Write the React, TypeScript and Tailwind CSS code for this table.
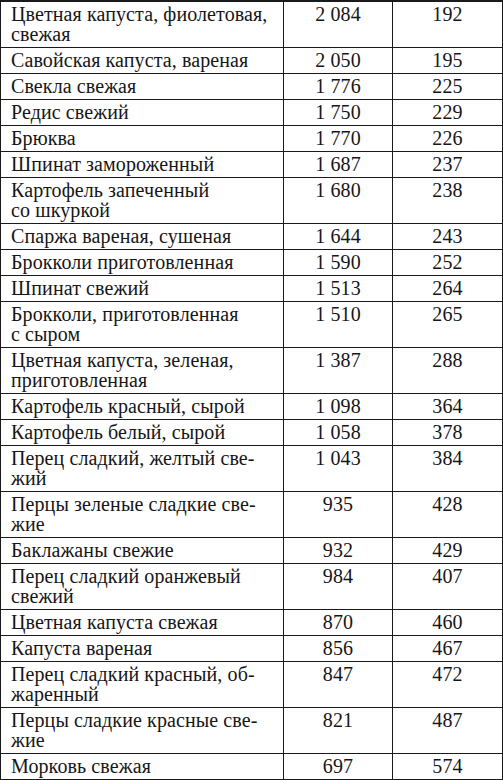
import React from "react";

type Row = { name: string[]; a: string; b: string };

const rows: Row[] = [
  { name: ["Цветная капуста, фиолетовая,", "свежая"], a: "2 084", b: "192" },
  { name: ["Савойская капуста, вареная"], a: "2 050", b: "195" },
  { name: ["Свекла свежая"], a: "1 776", b: "225" },
  { name: ["Редис свежий"], a: "1 750", b: "229" },
  { name: ["Брюква"], a: "1 770", b: "226" },
  { name: ["Шпинат замороженный"], a: "1 687", b: "237" },
  { name: ["Картофель запеченный", "со шкуркой"], a: "1 680", b: "238" },
  { name: ["Спаржа вареная, сушеная"], a: "1 644", b: "243" },
  { name: ["Брокколи приготовленная"], a: "1 590", b: "252" },
  { name: ["Шпинат свежий"], a: "1 513", b: "264" },
  { name: ["Брокколи, приготовленная", "с сыром"], a: "1 510", b: "265" },
  { name: ["Цветная капуста, зеленая,", "приготовленная"], a: "1 387", b: "288" },
  { name: ["Картофель красный, сырой"], a: "1 098", b: "364" },
  { name: ["Картофель белый, сырой"], a: "1 058", b: "378" },
  { name: ["Перец сладкий, желтый све-", "жий"], a: "1 043", b: "384" },
  { name: ["Перцы зеленые сладкие све-", "жие"], a: "935", b: "428" },
  { name: ["Баклажаны свежие"], a: "932", b: "429" },
  { name: ["Перец сладкий оранжевый", "свежий"], a: "984", b: "407" },
  { name: ["Цветная капуста свежая"], a: "870", b: "460" },
  { name: ["Капуста вареная"], a: "856", b: "467" },
  { name: ["Перец сладкий красный, об-", "жаренный"], a: "847", b: "472" },
  { name: ["Перцы сладкие красные све-", "жие"], a: "821", b: "487" },
  { name: ["Морковь свежая"], a: "697", b: "574" },
];

export default function App() {
  return (
    <div
      className="w-[503px] bg-white text-[#161616] text-[20px] leading-[20px] tracking-[0.1px]"
      style={{ fontFamily: '"Liberation Serif", "Times New Roman", serif' }}
    >
      <div className="border-l border-t-2 border-[#1a1a1a]">
        {rows.map((r, i) => (
          <div key={i} className="grid grid-cols-[283px_109px_1fr]">
            <div className="border-r border-b border-[#1a1a1a] pl-[10px] pt-[2px] pb-[3px] whitespace-nowrap">
              {r.name.map((l, j) => (
                <div key={j}>{l}</div>
              ))}
            </div>
            <div className="border-r border-b border-[#1a1a1a] text-center pt-[2px] pb-[3px]">{r.a}</div>
            <div className="border-r border-b border-[#1a1a1a] text-center pt-[2px] pb-[3px]">{r.b}</div>
          </div>
        ))}
      </div>
    </div>
  );
}
